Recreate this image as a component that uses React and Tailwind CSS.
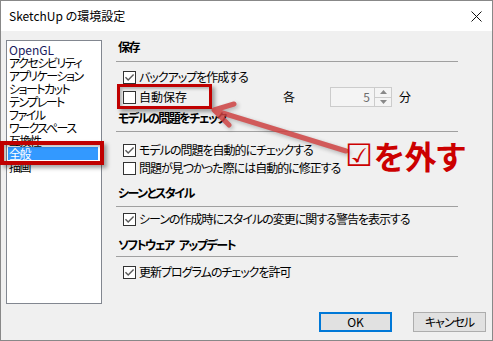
import React from "react";

function Check({ checked }) {
  return (
    <span className="w-[13px] h-[13px] border border-[#333333] bg-white flex items-center justify-center shrink-0">
      {checked && (
        <svg width="11" height="11" viewBox="0 0 11 11">
          <path d="M1.5 5.2 L4.2 8 L9.6 2.4" stroke="#5a5a5a" strokeWidth="1.4" fill="none" />
        </svg>
      )}
    </span>
  );
}

function Row({ checked, label, className = "" }) {
  return (
    <div className={"flex items-center h-[16px] pl-[7px] gap-[3px] " + className}>
      <Check checked={checked} />
      <span className="leading-[16px] whitespace-nowrap tracking-[-1px]">{label}</span>
    </div>
  );
}

function Header({ label, className = "" }) {
  return (
    <div className={"h-[16px] leading-[16px] pl-[2px] font-bold whitespace-nowrap tracking-[-1.5px] " + className}>{label}</div>
  );
}

function Sep({ className = "" }) {
  return <div className={"h-px w-[342px] bg-[#a0a0a0] " + className} />;
}

const items = [
  "OpenGL",
  "アクセシビリティ",
  "アプリケーション",
  "ショートカット",
  "テンプレート",
  "ファイル",
  "ワークスペース",
  "互換性",
  "全般",
  "描画",
];

export default function App() {
  return (
    <div className="w-[493px] h-[341px] border border-[#888888] flex flex-col relative bg-[#f0f0f0] text-[12px] text-black font-['Noto_Sans_CJK_JP','Noto_Sans',sans-serif] [font-feature-settings:'palt']">
      <div className="h-[30px] bg-white flex items-center justify-between pl-[8px] pr-[10px]">
        <span className="leading-[16px]">SketchUp の環境設定</span>
        <svg width="11" height="11" viewBox="0 0 11 11">
          <path d="M0.5 0.5 L10.5 10.5 M10.5 0.5 L0.5 10.5" stroke="#111" strokeWidth="1" />
        </svg>
      </div>
      <div className="flex-1 flex">
        <div className="ml-[5px] mt-[9px] w-[96px] h-[264px] border border-[#828790] bg-white pt-[2px] pl-[1px] pr-[3px] flex flex-col">
          {items.map((it) => (
            <div
              key={it}
              className={
                "h-[13px] leading-[13px] pl-[1px] whitespace-nowrap " +
                (it === "OpenGL" ? "tracking-normal text-[#1a1a60] " : "tracking-[-1.5px] ") +
                (it === "全般" ? "bg-[#3399ff] text-white" : "")
              }
            >
              {it}
            </div>
          ))}
        </div>
        <div className="ml-[14px] flex-1 flex flex-col">
          <Header label="保存" className="mt-[8px]" />
          <Sep className="mt-[6px]" />
          <Row checked label="バックアップを作成する" className="mt-[7px]" />
          <div className="flex items-center h-[20px] mt-[2px] pl-[7px]">
            <div className="flex items-center gap-[3px] w-[160px]">
              <Check checked={false} />
              <span className="leading-[16px]">自動保存</span>
            </div>
            <span className="leading-[16px]">各</span>
            <div className="ml-[35px] w-[62px] h-[20px] border border-[#cccccc] bg-[#f4f4f4] flex">
              <div className="flex-1 text-right pr-[4px] leading-[18px] text-[#6d6d6d]">5</div>
              <div className="w-[17px] border-l border-[#cccccc] flex flex-col">
                <div className="flex-1 flex items-center justify-center border-b border-[#cccccc]">
                  <svg width="7" height="4" viewBox="0 0 7 4"><path d="M0 4 L3.5 0 L7 4Z" fill="#888" /></svg>
                </div>
                <div className="flex-1 flex items-center justify-center">
                  <svg width="7" height="4" viewBox="0 0 7 4"><path d="M0 0 L3.5 4 L7 0Z" fill="#888" /></svg>
                </div>
              </div>
            </div>
            <span className="ml-[7px] leading-[16px]">分</span>
          </div>
          <Header label="モデルの問題をチェック" className="mt-[3px]" />
          <Sep className="mt-[5px]" />
          <Row checked label="モデルの問題を自動的にチェックする" className="mt-[10px]" />
          <Row checked={false} label="問題が見つかった際には自動的に修正する" className="mt-[2px]" />
          <Header label="シーンとスタイル" className="mt-[9px]" />
          <Sep className="mt-[5px]" />
          <Row checked label="シーンの作成時にスタイルの変更に関する警告を表示する" className="mt-[4px]" />
          <div className="h-[16px] leading-[16px] pl-[2px] font-bold whitespace-nowrap tracking-[-1.5px] mt-[10px] flex">
            <span>ソフトウェア</span>
            <span className="ml-[5px]">アップデート</span>
          </div>
          <Sep className="mt-[3px]" />
          <Row checked label="更新プログラムのチェックを許可" className="mt-[7px]" />
          <div className="mt-auto mb-[8px] flex justify-end gap-[21px] pr-[6px]">
            <button className="w-[73px] h-[20px] border-2 border-[#0078d7] bg-[#e1e1e1] leading-[16px]">OK</button>
            <button className="w-[73px] h-[20px] border border-[#adadad] bg-[#e1e1e1] leading-[18px] tracking-[-1px]">キャンセル</button>
          </div>
        </div>
      </div>

      {/* annotations */}
      <div className="absolute left-[-1px] top-[140px] w-[104px] h-[24px] border-[4px] border-[#c00000] shadow-[3px_3px_4px_rgba(0,0,0,0.35),inset_2px_2px_3px_rgba(0,0,0,0.25)]" />
      <div className="absolute left-[116px] top-[83px] w-[95px] h-[25px] border-[3px] border-[#c00000] shadow-[3px_3px_4px_rgba(0,0,0,0.35),inset_2px_2px_3px_rgba(0,0,0,0.25)]" />
      <svg className="absolute left-[-1px] top-[-1px] pointer-events-none" width="493" height="341" viewBox="0 0 493 341">
        <g stroke="#cc4040" strokeWidth="5" strokeLinecap="round" fill="none" opacity="0.85" style={{ filter: "drop-shadow(2px 2px 2px rgba(0,0,0,0.3))" }}>
          <path d="M346 151 L216 111" />
          <path d="M234 104 L214 110 L229 125" strokeLinejoin="round" />
        </g>
      </svg>
      <div className="absolute left-[344px] top-[137px] flex items-center text-[#cc0000] font-bold whitespace-nowrap">
        <span className="text-[31px] leading-[34px] font-normal font-['DejaVu_Sans',sans-serif]">☑</span>
        <span className="text-[32px] leading-[34px] ml-[1px]">を外す</span>
      </div>
    </div>
  );
}
